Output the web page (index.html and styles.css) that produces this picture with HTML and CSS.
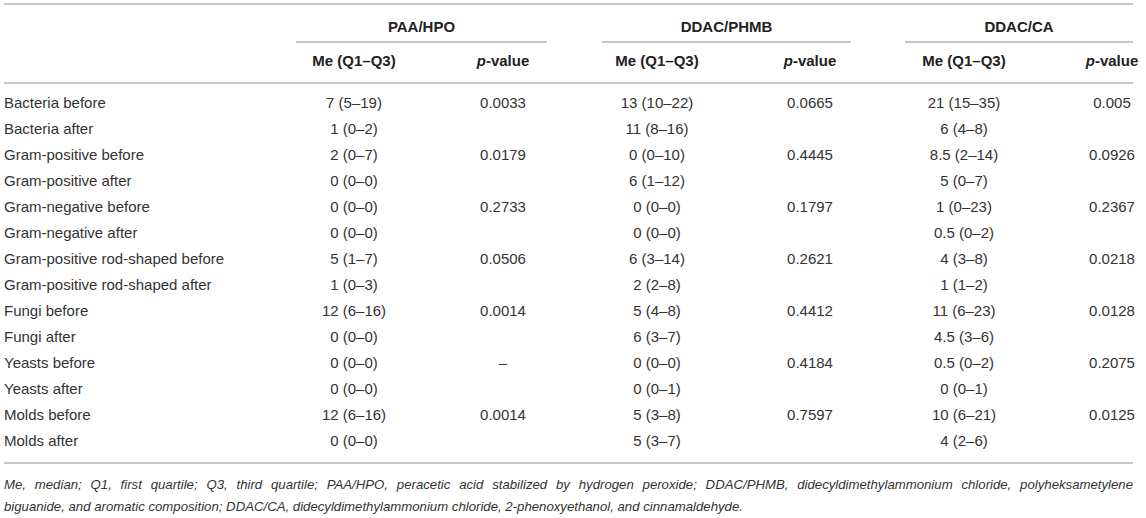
FILE: index.html
```html
<!DOCTYPE html>
<html lang="en">
<head>
<meta charset="utf-8">
<title>Table</title>
<link rel="stylesheet" href="styles.css">
</head>
<body>
<div class="wrap">
  <div class="grid">
    <div class="rule"></div>
    <div class="blank"></div>
    <div class="grp g1"><span>PAA/HPO</span></div>
    <div class="grp g2"><span>DDAC/PHMB</span></div>
    <div class="grp g3"><span>DDAC/CA</span></div>

    <div class="sub"></div>
    <div class="sub">Me (Q1–Q3)</div>
    <div class="sub"><i>p</i>-value</div>
    <div class="sub">Me (Q1–Q3)</div>
    <div class="sub"><i>p</i>-value</div>
    <div class="sub">Me (Q1–Q3)</div>
    <div class="sub last"><i>p</i>-value</div>
    <div class="rule mid"></div>

    <div class="lbl">Bacteria before</div><div class="c">7 (5–19)</div><div class="c">0.0033</div><div class="c">13 (10–22)</div><div class="c">0.0665</div><div class="c">21 (15–35)</div><div class="c last">0.005</div>
    <div class="lbl">Bacteria after</div><div class="c">1 (0–2)</div><div class="c"></div><div class="c">11 (8–16)</div><div class="c"></div><div class="c">6 (4–8)</div><div class="c last"></div>
    <div class="lbl">Gram-positive before</div><div class="c">2 (0–7)</div><div class="c">0.0179</div><div class="c">0 (0–10)</div><div class="c">0.4445</div><div class="c">8.5 (2–14)</div><div class="c last">0.0926</div>
    <div class="lbl">Gram-positive after</div><div class="c">0 (0–0)</div><div class="c"></div><div class="c">6 (1–12)</div><div class="c"></div><div class="c">5 (0–7)</div><div class="c last"></div>
    <div class="lbl">Gram-negative before</div><div class="c">0 (0–0)</div><div class="c">0.2733</div><div class="c">0 (0–0)</div><div class="c">0.1797</div><div class="c">1 (0–23)</div><div class="c last">0.2367</div>
    <div class="lbl">Gram-negative after</div><div class="c">0 (0–0)</div><div class="c"></div><div class="c">0 (0–0)</div><div class="c"></div><div class="c">0.5 (0–2)</div><div class="c last"></div>
    <div class="lbl">Gram-positive rod-shaped before</div><div class="c">5 (1–7)</div><div class="c">0.0506</div><div class="c">6 (3–14)</div><div class="c">0.2621</div><div class="c">4 (3–8)</div><div class="c last">0.0218</div>
    <div class="lbl">Gram-positive rod-shaped after</div><div class="c">1 (0–3)</div><div class="c"></div><div class="c">2 (2–8)</div><div class="c"></div><div class="c">1 (1–2)</div><div class="c last"></div>
    <div class="lbl">Fungi before</div><div class="c">12 (6–16)</div><div class="c">0.0014</div><div class="c">5 (4–8)</div><div class="c">0.4412</div><div class="c">11 (6–23)</div><div class="c last">0.0128</div>
    <div class="lbl">Fungi after</div><div class="c">0 (0–0)</div><div class="c"></div><div class="c">6 (3–7)</div><div class="c"></div><div class="c">4.5 (3–6)</div><div class="c last"></div>
    <div class="lbl">Yeasts before</div><div class="c">0 (0–0)</div><div class="c">–</div><div class="c">0 (0–0)</div><div class="c">0.4184</div><div class="c">0.5 (0–2)</div><div class="c last">0.2075</div>
    <div class="lbl">Yeasts after</div><div class="c">0 (0–0)</div><div class="c"></div><div class="c">0 (0–1)</div><div class="c"></div><div class="c">0 (0–1)</div><div class="c last"></div>
    <div class="lbl">Molds before</div><div class="c">12 (6–16)</div><div class="c">0.0014</div><div class="c">5 (3–8)</div><div class="c">0.7597</div><div class="c">10 (6–21)</div><div class="c last">0.0125</div>
    <div class="lbl">Molds after</div><div class="c">0 (0–0)</div><div class="c"></div><div class="c">5 (3–7)</div><div class="c"></div><div class="c">4 (2–6)</div><div class="c last"></div>

    <div class="rule bottom"></div>
  </div>
  <p class="note">Me, median; Q1, first quartile; Q3, third quartile; PAA/HPO, peracetic acid stabilized by hydrogen peroxide; DDAC/PHMB, didecyldimethylammonium chloride, polyheksametylene biguanide,&nbsp;and&nbsp;aromatic&nbsp;composition; DDAC/CA, didecyldimethylammonium chloride, 2-phenoxyethanol, and cinnamaldehyde.</p>
</div>
</body>
</html>
```

FILE: styles.css
```css
html, body {
  margin: 0;
  padding: 0;
  background: #ffffff;
}

body {
  font-family: "Liberation Sans", Arial, sans-serif;
  color: #333333;
}

.wrap {
  width: 1142px;
  margin: 3px 0 0 4px;
}

.grid {
  display: grid;
  grid-template-columns: 276px 148px 150px 158px 148px 160px 102px;
  font-size: 15px;
}

.rule {
  grid-column: 1 / -1;
  width: 1129px;
  height: 2px;
  background: #c8c8c8;
}

.rule.mid {
  margin-bottom: 6px;
}

.rule.bottom {
  margin-top: 8px;
}

.blank {
  grid-column: 1;
}

.grp {
  padding-top: 14px;
  font-weight: bold;
  color: #222222;
  text-align: center;
  line-height: 16px;
}

.grp span {
  display: block;
  padding-bottom: 6px;
  border-bottom: 2px solid #c8c8c8;
}

.g1 { grid-column: 2 / 4; }
.g1 span { margin: 0 31px 0 16px; }
.g2 { grid-column: 4 / 6; }
.g2 span { margin: 0 33px 0 24px; }
.g3 { grid-column: 6 / 8; }
.g3 span { margin: 0 13px 0 21px; }

.sub {
  padding: 10px 0 13px;
  line-height: 16px;
  font-weight: bold;
  color: #222222;
  text-align: center;
  white-space: nowrap;
}

.lbl,
.c {
  line-height: 26px;
  white-space: nowrap;
}

.c {
  text-align: center;
}

.last {
  padding-left: 34px;
}

.note {
  width: 1129px;
  margin: 0;
  padding-top: 10px;
  font-size: 13.2px;
  line-height: 22px;
  font-style: italic;
  text-align: justify;
  color: #333333;
}
```
